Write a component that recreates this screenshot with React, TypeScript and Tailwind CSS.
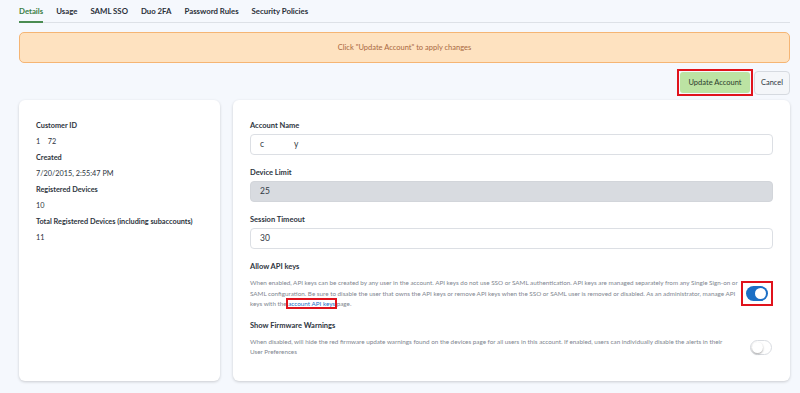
import React from 'react';

const tabs = ['Details', 'Usage', 'SAML SSO', 'Duo 2FA', 'Password Rules', 'Security Policies'];

function Toggle({ on }: { on: boolean }) {
  return on ? (
    <div className="w-[22px] h-[15px] rounded-full bg-[#1b6fc5] flex items-center justify-end pr-[2px]">
      <div className="w-[11px] h-[11px] rounded-full bg-white" />
    </div>
  ) : (
    <div className="w-[22px] h-[15px] rounded-full bg-white border border-[#d9dce1] flex items-center pl-[1px]">
      <div className="w-[11px] h-[11px] rounded-full bg-white shadow-[0_1px_2px_rgba(0,0,0,0.35)]" />
    </div>
  );
}

export default function App() {
  return (
    <div className="w-[800px] h-[393px] overflow-hidden bg-[#f5f8fd] pl-[19px] pr-[10px] font-['Lato',sans-serif] text-[#2d3440]">
      {/* Tabs */}
      <div className="flex gap-[13px] h-[23px] border-b border-[#dde1e7]">
        {tabs.map((t, i) => (
          <div
            key={t}
            className={
              i === 0
                ? 'h-[23px] pt-[6px] text-[7.8px] font-bold text-[#3c7f45] border-b-2 border-[#4a8c52]'
                : 'h-[23px] pt-[6px] text-[7.8px] font-bold text-[#2a2f38]'
            }
          >
            {t}
          </div>
        ))}
      </div>

      {/* Alert */}
      <div className="mt-[9px] h-[31px] rounded-[5px] border border-[#f5b574] bg-[#fee2c0] flex items-center justify-center text-[7.5px] text-[#a9683f]">
        Click "Update Account" to apply changes
      </div>

      {/* Actions */}
      <div className="mt-[6px] flex justify-end items-center gap-[1px]">
        <div className="flex border-2 border-[#e0131c] p-[1px]">
          <button className="w-[70px] h-[21px] rounded-[3px] bg-[#bce3a3] text-[7.5px] text-[#2b3b2c]">
            Update Account
          </button>
        </div>
        <button className="w-[36px] h-[24px] rounded-[4px] bg-[#f4f6f9] border border-[#d6dae0] text-[7.5px] text-[#2d3440]">
          Cancel
        </button>
      </div>

      {/* Cards */}
      <div className="mt-[4px] flex gap-[13px]">
        <div className="w-[201px] h-[281px] bg-white rounded-[6px] shadow-[0_1px_3px_rgba(0,0,0,0.18)] pl-[17px] pt-[21px]">
          {[
            ['Customer ID', '1 \u00a0 \u00a072'],
            ['Created', '7/20/2015, 2:55:47 PM'],
            ['Registered Devices', '10'],
            ['Total Registered Devices (including subaccounts)', '11'],
          ].map(([k, v]) => (
            <div key={k}>
              <div className="h-[16px] text-[7.3px] font-bold text-[#2d3440]">{k}</div>
              <div className="h-[16px] text-[7.3px] text-[#2d3440]">{v}</div>
            </div>
          ))}
        </div>

        <div className="flex-1 h-[281px] bg-white rounded-[6px] shadow-[0_1px_3px_rgba(0,0,0,0.18)] px-[17px] pt-[21px]">
          <div className="text-[7.5px] font-bold leading-[10px]">Account Name</div>
          <div className="mt-[3px] h-[21px] rounded-[4px] border border-[#dcdfe4] bg-white flex items-center pl-[9px] text-[8.5px] text-[#333a44]">
            c<span className="inline-block w-[30px]" />y
          </div>
          <div className="mt-[13px] text-[7.5px] font-bold leading-[10px]">Device Limit</div>
          <div className="mt-[3px] h-[21px] rounded-[4px] border border-[#d2d5da] bg-[#d8dbe0] flex items-center pl-[9px] text-[8.5px] text-[#333a44]">
            25
          </div>
          <div className="mt-[13px] text-[7.5px] font-bold leading-[10px]">Session Timeout</div>
          <div className="mt-[3px] h-[21px] rounded-[4px] border border-[#dcdfe4] bg-white flex items-center pl-[9px] text-[8.5px] text-[#333a44]">
            30
          </div>

          <div className="mt-[13px] text-[7.5px] font-bold leading-[10px]">Allow API keys</div>
          <div className="mt-[6px] flex items-center gap-[2px]">
            <p className="flex-1 text-[6.3px] leading-[10.5px] text-[#80868f]">
              When enabled, API keys can be created by any user in the account. API keys do not use SSO or SAML authentication. API keys are managed separately from any Single Sign-on or SAML configuration. Be sure to disable the user that owns the API keys or remove API keys when the SSO or SAML user is removed or disabled. As an administrator, manage API keys with the{' '}
              <span className="outline-2 outline-[#e0131c] text-[#1b6fc5]">account API keys</span> page.
            </p>
            <div className="border-2 border-[#e0131c] p-[3px]">
              <Toggle on />
            </div>
          </div>

          <div className="mt-[11px] text-[7.5px] font-bold leading-[10px]">Show Firmware Warnings</div>
          <div className="mt-[6px] flex items-center gap-[14px]">
            <p className="flex-1 text-[6.3px] leading-[10.5px] text-[#80868f]">
              When disabled, will hide the red firmware update warnings found on the devices page for all users in this account. If enabled, users can individually disable the alerts in their User Preferences
            </p>
            <div className="pr-[1px]">
              <Toggle on={false} />
            </div>
          </div>
        </div>
      </div>
    </div>
  );
}
